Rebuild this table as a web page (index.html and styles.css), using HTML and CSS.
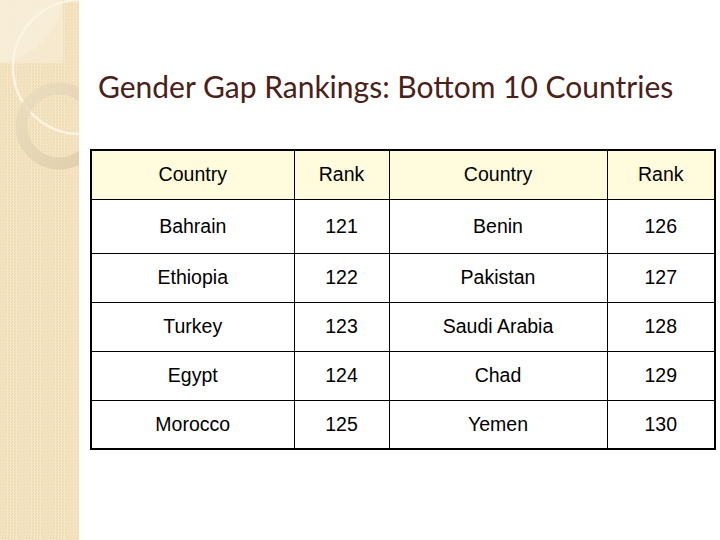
FILE: index.html
```html
<!DOCTYPE html>
<html>
<head>
<meta charset="utf-8">
<link rel="stylesheet" href="styles.css">
</head>
<body>
<div class="slide">
  <aside class="sidebar">
    <svg class="deco" width="79" height="540" viewBox="0 0 79 540">
      <defs>
        <linearGradient id="ringg" x1="0" y1="0" x2="1" y2="1">
          <stop offset="0" stop-color="#e9dcc0"/>
          <stop offset="1" stop-color="#ddcba6"/>
        </linearGradient>
      </defs>
      <rect x="0" y="0" width="63" height="63" fill="#f6ebd2" opacity="0.8"/>
      <path d="M63 0 A70 70 0 0 1 0 62 L0 0 Z" fill="#f8f0dc" opacity="0.7"/>
      <circle cx="80" cy="67" r="67" fill="none" stroke="#fbf4e2" stroke-width="2.5"/>
      <circle cx="59" cy="126" r="37.5" fill="none" stroke="url(#ringg)" stroke-width="12" opacity="0.85"/>
    </svg>
  </aside>
  <main class="content">
    <h1 class="title">Gender Gap Rankings: Bottom 10 Countries</h1>
    <table class="rank-table">
      <colgroup>
        <col class="c1"><col class="c2"><col class="c3"><col class="c4">
      </colgroup>
      <thead>
        <tr class="head"><th>Country</th><th>Rank</th><th>Country</th><th>Rank</th></tr>
      </thead>
      <tbody>
        <tr class="first"><td>Bahrain</td><td>121</td><td>Benin</td><td>126</td></tr>
        <tr><td>Ethiopia</td><td>122</td><td>Pakistan</td><td>127</td></tr>
        <tr><td>Turkey</td><td>123</td><td>Saudi Arabia</td><td>128</td></tr>
        <tr><td>Egypt</td><td>124</td><td>Chad</td><td>129</td></tr>
        <tr><td>Morocco</td><td>125</td><td>Yemen</td><td>130</td></tr>
      </tbody>
    </table>
  </main>
</div>
</body>
</html>
```
FILE: styles.css
```css
html, body {
  margin: 0;
  padding: 0;
  background: #ffffff;
}
.slide {
  width: 720px;
  height: 540px;
  display: flex;
  overflow: hidden;
}
.sidebar {
  width: 79px;
  height: 540px;
  flex: none;
  background-color: #f2e1bc;
  background-image: repeating-conic-gradient(#f5e7c6 0 25%, #efdcb4 0 50%);
  background-size: 3px 3px;
}
.deco {
  display: block;
}
.content {
  flex: 1;
  padding-left: 11px;
}
.title {
  margin: 0;
  padding: 69px 0 0 8px;
  height: 79px;
  box-sizing: border-box;
  font-family: Lato, "Open Sans", sans-serif;
  font-weight: 400;
  font-size: 30px;
  line-height: 34px;
  color: #4a2118;
  white-space: nowrap;
}
.rank-table {
  margin-top: 70px;
  border-collapse: collapse;
  border: 2px solid #000;
  width: 624px;
  table-layout: fixed;
  font-family: "Liberation Sans", Arial, sans-serif;
  font-size: 19.5px;
  color: #000;
}
.c1 { width: 203px; }
.c2 { width: 95px; }
.c3 { width: 218px; }
.c4 { width: 108px; }
.rank-table th,
.rank-table td {
  border: 1px solid #000;
  text-align: center;
  vertical-align: middle;
  padding: 0;
  font-weight: 400;
}
.head {
  height: 49px;
  background: #fffbdc;
}
.head th {
  border-bottom: 1px solid #000;
}
.rank-table tbody tr {
  height: 49px;
}
.rank-table tbody tr.first {
  height: 54px;
}
```
